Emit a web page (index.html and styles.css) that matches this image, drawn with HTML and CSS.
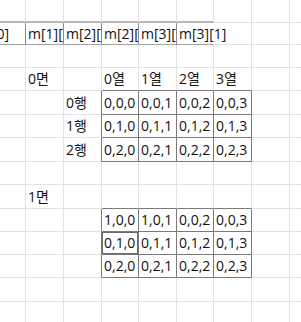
FILE: index.html
```html
<!DOCTYPE html>
<html lang="ko">
<head>
<meta charset="utf-8">
<link rel="stylesheet" href="styles.css">
</head>
<body>
<table class="sheet">
  <colgroup>
    <col class="w26"><col class="w38"><col class="w38"><col class="w37"><col class="w38"><col class="w37"><col class="w38"><col class="w38"><col class="w60">
  </colgroup>
  <tr class="h23"><td class="mt"></td><td class="mt"></td><td class="mt"></td><td class="mt"></td><td class="mt"></td><td class="mt"></td><td></td><td></td><td></td></tr>
  <tr class="h22"><td class="m first"><div class="tail">m[1][0]</div></td><td class="m">m[1][1]</td><td class="m">m[2][0]</td><td class="m">m[2][1]</td><td class="m">m[3][0]</td><td class="m last">m[3][1]</td><td></td><td></td><td></td></tr>
  <tr class="h23"><td></td><td></td><td></td><td></td><td></td><td></td><td></td><td></td><td></td></tr>
  <tr class="h23"><td></td><td>0면</td><td></td><td class="bt">0열</td><td class="bt">1열</td><td class="bt">2열</td><td class="bt">3열</td><td></td><td></td></tr>
  <tr class="h24"><td></td><td></td><td class="br">0행</td><td class="bx">0,0,0</td><td class="bx">0,0,1</td><td class="bx">0,0,2</td><td class="bx">0,0,3</td><td></td><td></td></tr>
  <tr class="h23"><td></td><td></td><td class="br">1행</td><td class="bx">0,1,0</td><td class="bx">0,1,1</td><td class="bx">0,1,2</td><td class="bx">0,1,3</td><td></td><td></td></tr>
  <tr class="h24"><td></td><td></td><td class="br">2행</td><td class="bx">0,2,0</td><td class="bx">0,2,1</td><td class="bx">0,2,2</td><td class="bx">0,2,3</td><td></td><td></td></tr>
  <tr class="h23"><td></td><td></td><td></td><td></td><td></td><td></td><td></td><td></td><td></td></tr>
  <tr class="h24"><td></td><td>1면</td><td></td><td class="bt"></td><td class="bt"></td><td class="bt"></td><td class="bt"></td><td></td><td></td></tr>
  <tr class="h23"><td></td><td></td><td class="br"></td><td class="bx">1,0,0</td><td class="bx">1,0,1</td><td class="bx">0,0,2</td><td class="bx">0,0,3</td><td></td><td></td></tr>
  <tr class="h23"><td></td><td></td><td class="br"></td><td class="bx sel">0,1,0</td><td class="bx">0,1,1</td><td class="bx">0,1,2</td><td class="bx">0,1,3</td><td></td><td></td></tr>
  <tr class="h23"><td></td><td></td><td class="br"></td><td class="bx">0,2,0</td><td class="bx">0,2,1</td><td class="bx">0,2,2</td><td class="bx">0,2,3</td><td></td><td></td></tr>
  <tr class="h24"><td></td><td></td><td></td><td></td><td></td><td></td><td></td><td></td><td></td></tr>
  <tr class="h30"><td></td><td></td><td></td><td></td><td></td><td></td><td></td><td></td><td></td></tr>
</table>
</body>
</html>
```

FILE: styles.css
```css
html, body {
  margin: 0;
  padding: 0;
  background: #ffffff;
  overflow: hidden;
}

.sheet {
  table-layout: fixed;
  border-collapse: separate;
  border-spacing: 0;
  width: 350px;
  font-family: "Open Sans", "Noto Sans CJK KR", sans-serif;
  font-size: 14px;
  color: #111111;
}

.w26 { width: 26px; }
.w37 { width: 37px; }
.w38 { width: 38px; }
.w60 { width: 60px; }

.h22 { height: 22px; }
.h23 { height: 23px; }
.h24 { height: 24px; }
.h30 { height: 30px; }

.sheet td {
  box-sizing: border-box;
  padding: 0 0 0 2px;
  border-right: 1px solid #e2e2e2;
  border-bottom: 1px solid #e2e2e2;
  white-space: nowrap;
  overflow: hidden;
  vertical-align: middle;
  line-height: 18px;
}

.sheet td.mt {
  border-bottom: 2px solid #b8b8b8;
}

.sheet td.m {
  border-right-color: #8c8c8c;
  border-bottom-color: #a6a6a6;
}

.sheet td.first {
  padding: 0;
}

.tail {
  display: flex;
  justify-content: flex-end;
  overflow: hidden;
  padding-right: 16px;
}

.sheet td.last {
  overflow: visible;
  border-right-color: transparent;
}

.sheet td.bt {
  border-bottom-color: #7a7a7a;
}

.sheet td.br {
  border-right-color: #7a7a7a;
}

.sheet td.bx {
  border-right-color: #7a7a7a;
  border-bottom-color: #7a7a7a;
}

.sheet td.sel {
  box-shadow: inset 0 0 0 1px #6a6a6a;
}
```
